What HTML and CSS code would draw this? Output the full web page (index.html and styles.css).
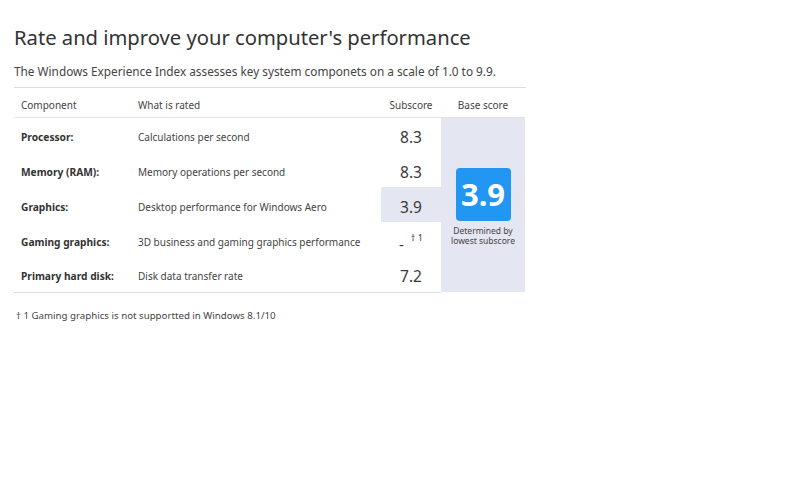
FILE: index.html
```html
<!DOCTYPE html>
<html>
<head>
<meta charset="utf-8">
<link rel="stylesheet" href="styles.css">
</head>
<body>
<div class="panel">
  <h1 class="title">Rate and improve your computer's performance</h1>
  <p class="intro">The Windows Experience Index assesses key system componets on a scale of 1.0 to 9.9.</p>
  <table class="wei">
    <thead>
      <tr>
        <th class="c-comp">Component</th>
        <th class="c-what">What is rated</th>
        <th class="c-sub">Subscore</th>
        <th class="c-base">Base score</th>
      </tr>
    </thead>
    <tbody>
      <tr>
        <td class="name">Processor:</td>
        <td class="what">Calculations per second</td>
        <td class="score">8.3</td>
        <td class="base" rowspan="5">
          <div class="badge">3.9</div>
          <div class="note">Determined by<br>lowest subscore</div>
        </td>
      </tr>
      <tr>
        <td class="name">Memory (RAM):</td>
        <td class="what">Memory operations per second</td>
        <td class="score">8.3</td>
      </tr>
      <tr>
        <td class="name">Graphics:</td>
        <td class="what">Desktop performance for Windows Aero</td>
        <td class="score low">3.9</td>
      </tr>
      <tr>
        <td class="name">Gaming graphics:</td>
        <td class="what">3D business and gaming graphics performance</td>
        <td class="score"><span class="dash">-</span><sup class="fn">† 1</sup></td>
      </tr>
      <tr>
        <td class="name">Primary hard disk:</td>
        <td class="what">Disk data transfer rate</td>
        <td class="score">7.2</td>
      </tr>
    </tbody>
  </table>
  <p class="footnote">† 1 Gaming graphics is not supportted in Windows 8.1/10</p>
</div>
</body>
</html>
```
FILE: styles.css
```css
html, body {
  margin: 0;
  padding: 0;
  background: #fff;
}
body {
  font-family: "Noto Sans", "DejaVu Sans", sans-serif;
  color: #333;
}
.panel {
  width: 540px;
  height: 339px;
  box-sizing: border-box;
  padding: 22px 14px 0 14px;
}
.title {
  margin: 0;
  font-size: 20.2px;
  font-weight: 400;
  line-height: 30px;
  color: #333;
}
.intro {
  margin: 10px 0 0 0;
  font-size: 11.8px;
  line-height: 18px;
  color: #444;
  padding-bottom: 7px;
  border-bottom: 1px solid #dcdcdc;
}
.wei {
  width: 511px;
  border-collapse: collapse;
  table-layout: fixed;
}
.wei th {
  font-size: 10px;
  font-weight: 400;
  color: #444;
  height: 29px;
  text-align: left;
  vertical-align: bottom;
  padding: 0 7px 5px 7px;
  border-bottom: 1px solid #e2e2e2;
  box-sizing: border-box;
}
.wei th.c-comp { width: 117px; }
.wei th.c-what { width: 250px; }
.wei th.c-sub { width: 60px; text-align: center; padding-left: 0; padding-right: 0; }
.wei th.c-base { width: 84px; text-align: center; padding-left: 0; padding-right: 0; }
.wei td {
  height: 35px;
  box-sizing: border-box;
  padding: 4px 7px 0 7px;
  font-size: 10px;
  color: #333;
}
.wei tbody tr:last-child td {
  border-bottom: 1px solid #dcdcdc;
}
.wei td.name {
  font-weight: 700;
  font-size: 10.2px;
}
.wei td.what {
  color: #444;
}
.wei td.score {
  padding: 4px 0 0 0;
  text-align: center;
  font-size: 15.5px;
  color: #3a3a3a;
}
.wei td.score.low {
  background: #e4e6f1;
}
.dash {
  font-size: 15px;
  vertical-align: -3px;
}
.fn {
  font-size: 9px;
  vertical-align: 6px;
  margin-left: 7px;
}
.wei td.base {
  padding: 50px 0 0 0;
  background: #e4e6f1;
  text-align: center;
  vertical-align: top;
}
.badge {
  width: 55px;
  height: 53px;
  margin: 0 auto;
  border-radius: 4px;
  background: #2196f3;
  color: #fff;
  font-size: 31px;
  font-weight: 700;
  line-height: 53px;
}
.note {
  margin-top: 5px;
  font-size: 8.5px;
  line-height: 10px;
  color: #444;
}
.footnote {
  margin: 16px 0 0 2px;
  font-size: 9.7px;
  color: #444;
}
```
